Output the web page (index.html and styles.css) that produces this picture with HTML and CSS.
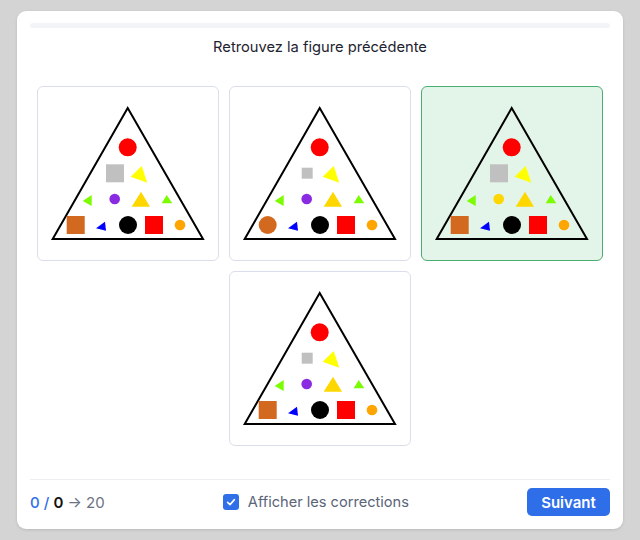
FILE: index.html
```html
<!DOCTYPE html>
<html lang="fr">
<head>
<meta charset="utf-8">
<title>Retrouvez la figure précédente</title>
<link rel="stylesheet" href="styles.css">
</head>
<body>
<div class="panel">
  <div class="progress"></div>
  <h1 class="title">Retrouvez la figure précédente</h1>
  <div class="grid">
    <div class="choice">
      <svg class="fig" viewBox="0 0 180 173" width="180" height="173">
        <polygon points="89.7,21 14.7,152 165,152" fill="none" stroke="#000" stroke-width="2"/>
        <circle cx="89.7" cy="60.3" r="9" fill="#ff0000"/>
        <rect x="68" y="77.3" width="18" height="18" fill="#c0c0c0"/>
        <polygon points="103.7,79 92.7,89.7 109.3,95.7" fill="#ffff00"/>
        <polygon points="53.7,108 44.7,114 53.7,119" fill="#7cfc00"/>
        <circle cx="76.7" cy="112" r="5.3" fill="#8a2be2"/>
        <polygon points="103,104.7 93.7,119.7 112,119.7" fill="#ffd700"/>
        <polygon points="128.7,108 123.7,116.3 134.3,116.3" fill="#7cfc00"/>
        <rect x="28.7" y="129" width="18" height="18" fill="#d2691e"/>
        <polygon points="67,134.7 58,141.3 68,143.7" fill="#0000ff"/>
        <circle cx="90" cy="138" r="9" fill="#000"/>
        <rect x="107" y="129" width="18" height="18" fill="#ff0000"/>
        <circle cx="142" cy="138" r="5.3" fill="#ffa500"/>
      </svg>
    </div>
    <div class="choice">
      <svg class="fig" viewBox="0 0 180 173" width="180" height="173">
        <polygon points="89.7,21 14.7,152 165,152" fill="none" stroke="#000" stroke-width="2"/>
        <circle cx="89.7" cy="60.3" r="9" fill="#ff0000"/>
        <rect x="71.7" y="80.7" width="11" height="11" fill="#c0c0c0"/>
        <polygon points="103.7,79 92.7,89.7 109.3,95.7" fill="#ffff00"/>
        <polygon points="53.7,108 44.7,114 53.7,119" fill="#7cfc00"/>
        <circle cx="76.7" cy="112" r="5.3" fill="#8a2be2"/>
        <polygon points="103,104.7 93.7,119.7 112,119.7" fill="#ffd700"/>
        <polygon points="128.7,108 123.7,116.3 134.3,116.3" fill="#7cfc00"/>
        <circle cx="37.7" cy="138" r="9" fill="#d2691e"/>
        <polygon points="67,134.7 58,141.3 68,143.7" fill="#0000ff"/>
        <circle cx="90" cy="138" r="9" fill="#000"/>
        <rect x="107" y="129" width="18" height="18" fill="#ff0000"/>
        <circle cx="142" cy="138" r="5.3" fill="#ffa500"/>
      </svg>
    </div>
    <div class="choice choice--correct">
      <svg class="fig" viewBox="0 0 180 173" width="180" height="173">
        <polygon points="89.7,21 14.7,152 165,152" fill="none" stroke="#000" stroke-width="2"/>
        <circle cx="89.7" cy="60.3" r="9" fill="#ff0000"/>
        <rect x="68" y="77.3" width="18" height="18" fill="#c0c0c0"/>
        <polygon points="103.7,79 92.7,89.7 109.3,95.7" fill="#ffff00"/>
        <polygon points="53.7,108 44.7,114 53.7,119" fill="#7cfc00"/>
        <circle cx="76.7" cy="112" r="5.3" fill="#ffd700"/>
        <polygon points="103,104.7 93.7,119.7 112,119.7" fill="#ffd700"/>
        <polygon points="128.7,108 123.7,116.3 134.3,116.3" fill="#7cfc00"/>
        <rect x="28.7" y="129" width="18" height="18" fill="#d2691e"/>
        <polygon points="67,134.7 58,141.3 68,143.7" fill="#0000ff"/>
        <circle cx="90" cy="138" r="9" fill="#000"/>
        <rect x="107" y="129" width="18" height="18" fill="#ff0000"/>
        <circle cx="142" cy="138" r="5.3" fill="#ffa500"/>
      </svg>
    </div>
    <div class="choice choice--center">
      <svg class="fig" viewBox="0 0 180 173" width="180" height="173">
        <polygon points="89.7,21 14.7,152 165,152" fill="none" stroke="#000" stroke-width="2"/>
        <circle cx="89.7" cy="60.3" r="9" fill="#ff0000"/>
        <rect x="71.7" y="80.7" width="11" height="11" fill="#c0c0c0"/>
        <polygon points="103.7,79 92.7,89.7 109.3,95.7" fill="#ffff00"/>
        <polygon points="53.7,108 44.7,114 53.7,119" fill="#7cfc00"/>
        <circle cx="76.7" cy="112" r="5.3" fill="#8a2be2"/>
        <polygon points="103,104.7 93.7,119.7 112,119.7" fill="#ffd700"/>
        <polygon points="128.7,108 123.7,116.3 134.3,116.3" fill="#7cfc00"/>
        <rect x="28.7" y="129" width="18" height="18" fill="#d2691e"/>
        <polygon points="67,134.7 58,141.3 68,143.7" fill="#0000ff"/>
        <circle cx="90" cy="138" r="9" fill="#000"/>
        <rect x="107" y="129" width="18" height="18" fill="#ff0000"/>
        <circle cx="142" cy="138" r="5.3" fill="#ffa500"/>
      </svg>
    </div>
  </div>
  <div class="footer">
    <div class="score"><span class="score-cur">0 /</span> <span class="score-tot">0</span> <span class="score-goal">→ 20</span></div>
    <label class="toggle">
      <span class="checkbox"><svg viewBox="0 0 16 16" width="16" height="16"><path d="M4.6 8.3 L7 10.6 L11.4 5.6" fill="none" stroke="#fff" stroke-width="1.6" stroke-linecap="round" stroke-linejoin="round"/></svg></span>
      <span class="toggle-text">Afficher les corrections</span>
    </label>
    <button class="btn">Suivant</button>
  </div>
</div>
</body>
</html>
```

FILE: styles.css
```css
* { box-sizing: border-box; }
html, body {
  margin: 0;
  padding: 0;
  background: #d4d4d4;
  font-family: Inter, "Noto Sans", "Liberation Sans", sans-serif;
}
body {
  padding: 11px 17px;
}
.panel {
  width: 606px;
  height: 518px;
  background: #fff;
  border-radius: 9px;
  box-shadow: 0 1px 3px rgba(0,0,0,0.12);
  padding: 12px 13px 13px;
  display: flex;
  flex-direction: column;
}
.progress {
  height: 5px;
  border-radius: 3px;
  background: #f3f4f7;
}
.title {
  margin: 9px 0 0;
  font-size: 14.7px;
  line-height: 20px;
  font-weight: 400;
  text-align: center;
  color: #1e2330;
}
.grid {
  margin: 29px auto 0;
  display: grid;
  grid-template-columns: repeat(3, 182px);
  grid-auto-rows: 175px;
  gap: 10px;
}
.choice {
  border: 1.5px solid #d8deea;
  border-radius: 6px;
  background: #fff;
  display: flex;
  align-items: center;
  justify-content: center;
}
.choice--center {
  grid-column: 2;
}
.choice--correct {
  border-color: #4cad73;
  background: #e3f4e9;
}
.fig {
  display: block;
  flex: none;
}
.footer {
  margin-top: 33px;
  border-top: 1px solid #eceef2;
  padding-top: 8px;
  display: flex;
  align-items: center;
  justify-content: space-between;
}
.score {
  font-size: 15px;
  color: #6b7283;
}
.score-cur {
  color: #2f6fe8;
  font-weight: 500;
}
.score-tot {
  color: #111;
  font-weight: 600;
}
.score-goal {
  color: #6b7283;
}
.toggle {
  display: flex;
  align-items: center;
  gap: 9px;
}
.checkbox {
  width: 16px;
  height: 16px;
  border-radius: 3px;
  background: #2f6fe8;
  display: flex;
}
.toggle-text {
  font-size: 14.6px;
  color: #5b6478;
}
.btn {
  width: 83px;
  height: 28px;
  border: none;
  border-radius: 5px;
  background: #2e6ee9;
  color: #fff;
  font-family: inherit;
  font-size: 15px;
  font-weight: 600;
  padding: 0;
}
```
